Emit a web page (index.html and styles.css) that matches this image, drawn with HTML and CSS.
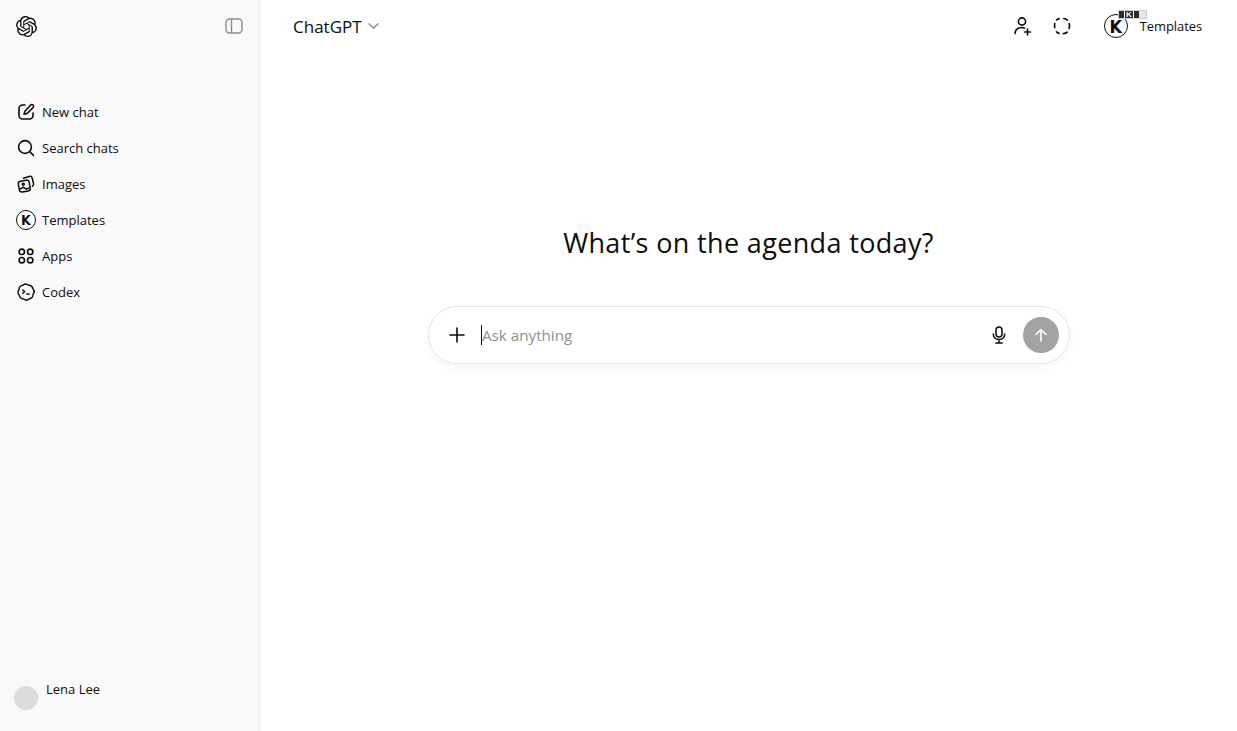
FILE: index.html
```html
<!DOCTYPE html>
<html lang="en">
<head>
    <meta charset="UTF-8">
    <meta name="viewport" content="width=device-width, initial-scale=1.0">
    <title>ChatGPT</title>
    <link rel="stylesheet" href="styles.css">
</head>
<body>
    <div class="app">
        <!-- left sidebar -->
        <aside class="sidebar">
            <div class="side-top">
                <svg class="logo" width="21" height="21" viewBox="0 0 24 24" fill="#0d0d0d"><path d="M22.2819 9.8211a5.9847 5.9847 0 0 0-.5157-4.9108 6.0462 6.0462 0 0 0-6.5098-2.9A6.0651 6.0651 0 0 0 4.9807 4.1818a5.9847 5.9847 0 0 0-3.9977 2.9 6.0462 6.0462 0 0 0 .7427 7.0966 5.98 5.98 0 0 0 .511 4.9107 6.051 6.051 0 0 0 6.5146 2.9001A5.9847 5.9847 0 0 0 13.2599 24a6.0557 6.0557 0 0 0 5.7718-4.2058 5.9894 5.9894 0 0 0 3.9977-2.9001 6.0557 6.0557 0 0 0-.7475-7.0729zm-9.022 12.6081a4.4755 4.4755 0 0 1-2.8764-1.0408l.1419-.0804 4.7783-2.7582a.7948.7948 0 0 0 .3927-.6813v-6.7369l2.02 1.1686a.071.071 0 0 1 .038.052v5.5826a4.504 4.504 0 0 1-4.4945 4.4944zm-9.6607-4.1254a4.4708 4.4708 0 0 1-.5346-3.0137l.142.0852 4.783 2.7582a.7712.7712 0 0 0 .7806 0l5.8428-3.3685v2.3324a.0804.0804 0 0 1-.0332.0615L9.74 19.9502a4.4992 4.4992 0 0 1-6.1408-1.6464zM2.3408 7.8956a4.485 4.485 0 0 1 2.3655-1.9728V11.6a.7664.7664 0 0 0 .3879.6765l5.8144 3.3543-2.0201 1.1685a.0757.0757 0 0 1-.071 0l-4.8303-2.7865A4.504 4.504 0 0 1 2.3408 7.872zm16.5963 3.8558L13.1038 8.364 15.1192 7.2a.0757.0757 0 0 1 .071 0l4.8303 2.7913a4.4944 4.4944 0 0 1-.6765 8.1042v-5.6772a.79.79 0 0 0-.407-.667zm2.0107-3.0231l-.142-.0852-4.7735-2.7818a.7759.7759 0 0 0-.7854 0L9.409 9.2297V6.8974a.0662.0662 0 0 1 .0284-.0615l4.8303-2.7866a4.4992 4.4992 0 0 1 6.6802 4.66zM8.3065 12.863l-2.02-1.1638a.0804.0804 0 0 1-.038-.0567V6.0742a4.4992 4.4992 0 0 1 7.3757-3.4537l-.142.0805L8.704 5.459a.7948.7948 0 0 0-.3927.6813zm1.0976-2.3654l2.602-1.4998 2.6069 1.4998v2.9994l-2.5974 1.4997-2.6067-1.4997Z"/></svg>
                <svg width="18" height="16" viewBox="0 0 18 16" fill="none" stroke="#8f8f8f" stroke-width="1.4"><rect x="1" y="1" width="16" height="14" rx="3.5"/><path d="M6.5 1v14"/></svg>
            </div>

            <nav class="side-nav">
                <a class="nav-item">
                    <svg class="nav-icon" viewBox="0 0 20 20" fill="none" stroke="#0d0d0d" stroke-width="1.6" stroke-linecap="round" stroke-linejoin="round"><path d="M9 3H6.500A3.500 3.500 0 0 0 3 6.500v7A3.500 3.500 0 0 0 6.500 17h7a3.500 3.500 0 0 0 3.500-3.500V11"/><path d="M15 2.800a1.700 1.700 0 0 1 2.300 2.400l-6.200 6.200-3 .8.8-3z"/></svg>
                    <span>New chat</span>
                </a>
                <a class="nav-item">
                    <svg class="nav-icon" viewBox="0 0 20 20" fill="none" stroke="#0d0d0d" stroke-width="1.6" stroke-linecap="round"><circle cx="9" cy="9" r="6.400"/><path d="M13.800 13.800l3.600 3.600"/></svg>
                    <span>Search chats</span>
                </a>
                <a class="nav-item">
                    <svg class="nav-icon" viewBox="0 0 20 20" fill="none" stroke="#0d0d0d" stroke-width="1.500" stroke-linecap="round" stroke-linejoin="round"><rect x="2.800" y="6.600" width="11" height="11" rx="2.500" transform="rotate(-10 8.300 12.100)"/><path d="M7.500 4.200l5.600-1.700c1.400-.4 2.700.3 3.100 1.700l1.300 5c.3 1.200-.1 2.300-1 3"/><circle cx="7.200" cy="10.200" r="1"/><path d="M4 15.200l3.300-2 3 2 2.800-1.400"/></svg>
                    <span>Images</span>
                </a>
                <a class="nav-item">
                    <span class="k-badge">K</span>
                    <span>Templates</span>
                </a>
                <a class="nav-item">
                    <svg class="nav-icon" viewBox="0 0 20 20" fill="none" stroke="#0d0d0d" stroke-width="1.6"><circle cx="5.800" cy="5.800" r="2.700"/><circle cx="14.200" cy="5.800" r="2.700"/><circle cx="5.800" cy="14.200" r="2.700"/><circle cx="14.200" cy="14.200" r="2.700"/></svg>
                    <span>Apps</span>
                </a>
                <a class="nav-item">
                    <svg class="nav-icon" viewBox="0 0 20 20" fill="none" stroke="#0d0d0d" stroke-width="1.500" stroke-linecap="round" stroke-linejoin="round"><path d="M7 3.200C8.600 1.800 11 1.900 12.400 3.300 14.600 3 16.600 4.500 16.900 6.700 18.400 8.200 18.500 10.600 17.100 12.200 17.300 14.400 15.600 16.400 13.400 16.700 11.800 18.300 9.400 18.400 7.700 17 5.500 17.200 3.500 15.500 3.300 13.300 1.700 11.700 1.700 9.200 3.100 7.600 3 5.300 4.800 3.300 7 3.200z"/><path d="M6.800 8l1.800 1.600-1.800 1.600"/><path d="M10.800 12h2.400"/></svg>
                    <span>Codex</span>
                </a>
            </nav>

            <div class="profile">
                <div class="avatar"></div>
                <span class="profile-name">Lena Lee</span>
            </div>
        </aside>

        <!-- main area -->
        <main class="main">
            <header class="topbar">
                <div class="model">
                    <span>ChatGPT</span>
                    <svg width="11" height="8" viewBox="0 0 12 8" fill="none" stroke="#8a8a8a" stroke-width="1.400" stroke-linecap="round" stroke-linejoin="round"><path d="M1 1.500l5 5 5-5"/></svg>
                </div>
                <div class="actions">
                    <svg class="nav-icon" viewBox="-0.5 0 20 20" fill="none" stroke="#0d0d0d" stroke-width="1.600" stroke-linecap="round"><circle cx="9.500" cy="5.500" r="3.600"/><path d="M2.500 17.500c.2-3.800 3-6 7-6 1 0 1.900.1 2.600.4"/><path d="M15 13v6M12 16h6"/></svg>
                    <svg class="nav-icon" viewBox="0 0 20 20" fill="none" stroke="#0d0d0d" stroke-width="1.700" stroke-linecap="round"><path d="M7 2.600c-.9.300-1.700.7-2.300 1.300M2.800 7.500c-.3 1-.3 2.800-.1 4M4.500 15.900c.7.700 1.500 1.200 2.500 1.500M11.500 17.600c1.300-.2 2.500-.6 3.600-1.400M17.200 12.500c.4-1.500.4-3.300 0-4.800M15.400 4.100c-1-.8-2.300-1.400-3.600-1.600"/></svg>
                    <div class="workspace">
                        <span class="k-badge large">K</span>
                        <span>Templates</span>
                        <!-- broken little preview that sits over the name -->
                        <div class="preview"><span class="preview-mark">K</span></div>
                    </div>
                </div>
            </header>

            <section class="center">
                <h1 class="title">What’s on the agenda today?</h1>
                <div class="composer">
                    <svg class="plus" width="16" height="16" viewBox="0 0 16 16" stroke="#0d0d0d" stroke-width="1.600" stroke-linecap="round"><path d="M8 1v14M1 8h14"/></svg>
                    <div class="caret"></div>
                    <span class="placeholder">Ask anything</span>
                    <svg class="mic" width="14" height="18" viewBox="0 0 14 18" fill="none" stroke="#0d0d0d" stroke-width="1.500" stroke-linecap="round"><rect x="4" y="1" width="6" height="10" rx="3"/><path d="M1.300 8c0 3.400 2.400 5.500 5.700 5.500s5.700-2.100 5.700-5.500M7 13.500V17M3.800 17h6.400"/></svg>
                    <button class="send">
                        <svg width="14" height="14" viewBox="0 0 14 14" fill="none" stroke="#fff" stroke-width="1.600" stroke-linecap="round" stroke-linejoin="round"><path d="M7 13V1.500M2 6.500l5-5 5 5"/></svg>
                    </button>
                </div>
            </section>
        </main>
    </div>
</body>
</html>
```

FILE: styles.css
```css
* {
    box-sizing: border-box;
    margin: 0;
    padding: 0;
}

body {
    font-family: "Open Sans", "Noto Sans", sans-serif;
    font-size: 13px;
    color: #0d0d0d;
    background-color: white;
}

.app {
    display: flex;
    height: 731px;
    overflow: hidden;
}

.sidebar {
    width: 260px;
    flex-shrink: 0;
    display: flex;
    flex-direction: column;
    background-color: #f9f9f9;
    border-right: 1px solid #ececec;
}

.side-top {
    display: flex;
    justify-content: space-between;
    align-items: center;
    height: 52px;
    padding: 0 16px 0 15.5px;
}

.side-nav {
    margin-top: 42px;
    display: flex;
    flex-direction: column;
}

.nav-item {
    display: flex;
    align-items: center;
    gap: 6px;
    height: 36px;
    padding-left: 16px;
}

.nav-icon {
    width: 20px;
    height: 20px;
    flex-shrink: 0;
}

.k-badge {
    width: 20px;
    height: 20px;
    flex-shrink: 0;
    display: flex;
    justify-content: center;
    align-items: center;
    border: 1.5px solid #0d0d0d;
    border-radius: 50%;
    background-color: white;
    font-family: "DejaVu Sans Condensed", "Liberation Sans", sans-serif;
    font-size: 14px;
    font-weight: bold;
}

.k-badge.large {
    width: 24px;
    height: 24px;
    font-size: 18px;
}

.profile {
    margin-top: auto;
    display: flex;
    gap: 8px;
    padding: 0 0 21px 14px;
}

.avatar {
    width: 24px;
    height: 24px;
    margin-top: 3px;
    border-radius: 50%;
    background-color: #dcdcdc;
}

.profile-name {
    line-height: 14px;
    margin-top: -1px;
    height: 24px;
}

.main {
    flex: 1;
    display: flex;
    flex-direction: column;
}

.topbar {
    display: flex;
    justify-content: space-between;
    align-items: center;
    height: 52px;
    padding: 0 35px 0 33px;
}

.model {
    display: flex;
    align-items: center;
    gap: 6px;
    font-size: 17px;
}

.actions {
    display: flex;
    align-items: center;
    gap: 20px;
}

.workspace {
    position: relative;
    display: flex;
    align-items: center;
    gap: 12px;
    margin-left: 12px;
    letter-spacing: -0.1px;
}

.preview {
    position: absolute;
    left: 14px;
    top: -4px;
    width: 29px;
    height: 9px;
    background: #e4e4e4;
    border: 1px solid #cfcfcf;
}

.preview-mark {
    display: block;
    width: 20px;
    height: 100%;
    text-align: center;
    color: white;
    background: linear-gradient(to right, #2b2b2b 5px, #fff 5px, #fff 6px, #2b2b2b 6px, #2b2b2b 14px, #fff 14px, #fff 15px, #2b2b2b 15px);
    font-family: "Liberation Sans", sans-serif;
    font-size: 8px;
    font-weight: bold;
    line-height: 8px;
}

.center {
    display: flex;
    flex-direction: column;
    align-items: center;
    padding-top: 171px;
}

.title {
    font-size: 27px;
    font-weight: 400;
    line-height: 40px;
    letter-spacing: 0.35px;
}

.composer {
    margin: 43px 0 0 1px;
    width: 642px;
    height: 58px;
    display: flex;
    align-items: center;
    padding: 0 10px 0 20px;
    background-color: white;
    border: 1px solid #e5e5e5;
    border-radius: 29px;
    box-shadow: 0 4px 8px rgba(0, 0, 0, 0.04);
}

.caret {
    width: 1px;
    height: 20px;
    margin-left: 16px;
    background-color: #0d0d0d;
}

.placeholder {
    flex: 1;
    font-size: 15.2px;
    color: #8f8f8f;
}

.mic {
    margin-right: 17px;
}

.send {
    width: 36px;
    height: 36px;
    display: flex;
    justify-content: center;
    align-items: center;
    border: none;
    border-radius: 50%;
    background-color: #a3a3a3;
}
```
